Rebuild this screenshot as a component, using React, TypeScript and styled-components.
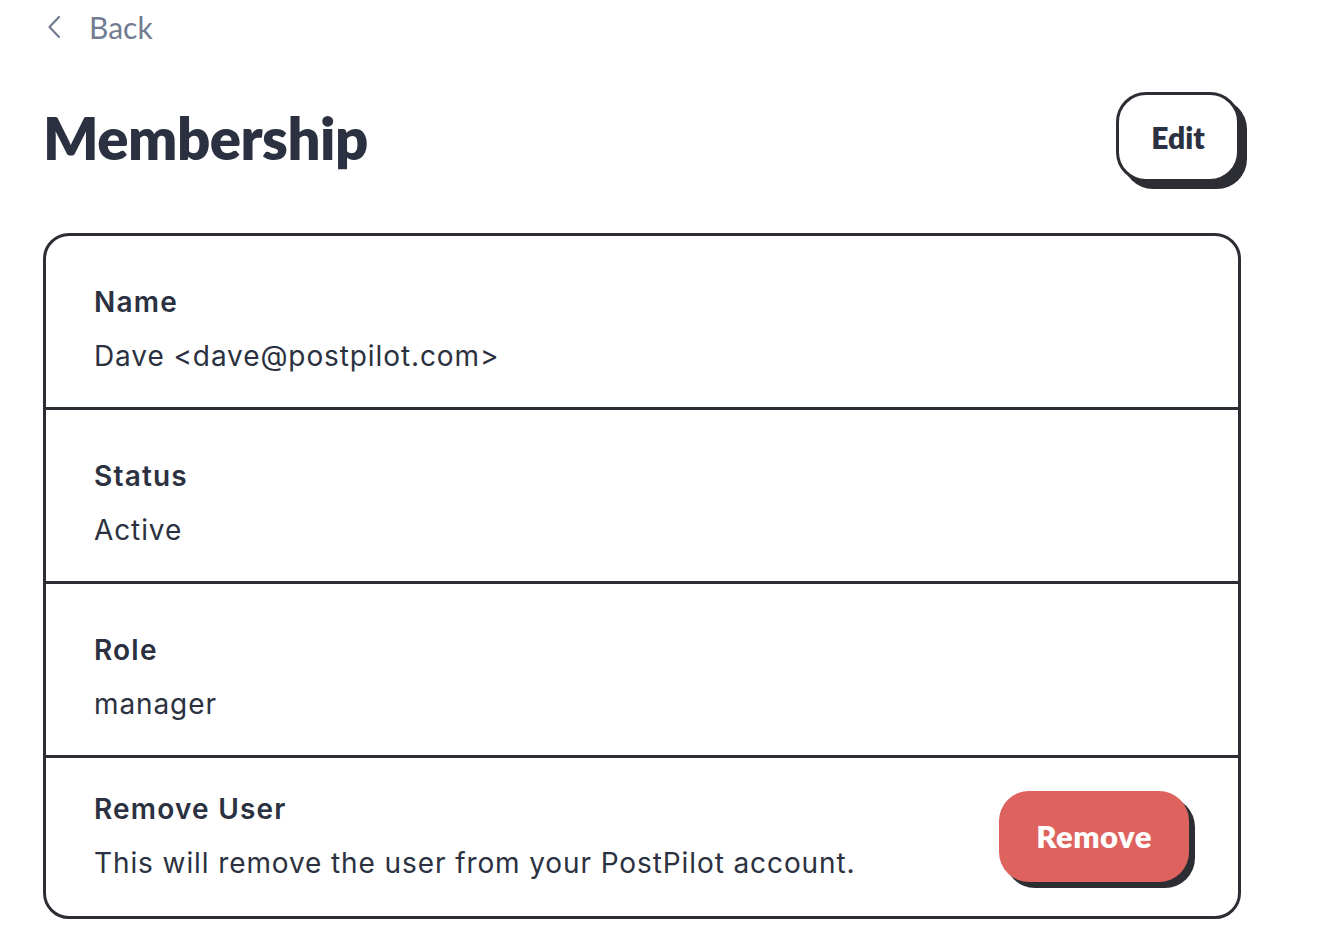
import styled, { createGlobalStyle } from "styled-components";

const GlobalStyle = createGlobalStyle`
  html, body {
    margin: 0;
    padding: 0;
    background: #ffffff;
  }
  body {
    font-family: "Inter", "Open Sans", sans-serif;
    color: #2b3140;
  }
`;

const Page = styled.div`
  width: 1340px;
  padding: 0 99px 0 43px;
  box-sizing: border-box;
`;

const BackLink = styled.a`
  display: flex;
  align-items: center;
  gap: 28px;
  height: 54px;
  padding-left: 4px;
  color: #727c90;
  font-family: "Lato", sans-serif;
  font-size: 30px;
  text-decoration: none;
  cursor: pointer;
`;

const Header = styled.div`
  display: flex;
  align-items: center;
  justify-content: space-between;
  margin-top: 38px;
  margin-bottom: 51px;
`;

const Title = styled.h1`
  margin: 0;
  font-family: "Lato", sans-serif;
  font-size: 58px;
  font-weight: 800;
  letter-spacing: -0.5px;
  color: #2b3140;
`;

const ShadowButton = styled.button<{ $variant?: "outline" | "danger" }>`
  font-family: "Lato", sans-serif;
  font-weight: 800;
  border-radius: 30px;
  cursor: pointer;
  box-sizing: border-box;
  ${(p) =>
    p.$variant === "danger"
      ? `
    background: #de625d;
    color: #ffffff;
    border: none;
    width: 190px;
    height: 91px;
    font-size: 31px;
    letter-spacing: 0.5px;
    box-shadow: 6px 6px 0 #2d2e34;
  `
      : `
    background: #ffffff;
    color: #2b3140;
    border: 3px solid #2d2e34;
    width: 124px;
    height: 90px;
    font-size: 30px;
    box-shadow: 7px 7px 0 #2d2e34;
  `}
`;

const EditButton = styled(ShadowButton)`
  margin-right: 1px;
`;

const Card = styled.div`
  border: 3px solid #2d2e34;
  border-radius: 26px;
  overflow: hidden;
`;

const Row = styled.div<{ $last?: boolean }>`
  display: flex;
  align-items: center;
  justify-content: space-between;
  padding: ${(p) => (p.$last ? "24px 49px 26px 48px" : "39px 48px 24px 48px")};
  border-bottom: ${(p) => (p.$last ? "none" : "3px solid #2d2e34")};
`;

const Field = styled.div`
  display: flex;
  flex-direction: column;
`;

const Label = styled.div`
  font-size: 28px;
  font-weight: 600;
  line-height: 54px;
  letter-spacing: 1.2px;
  color: #2b3140;
`;

const Value = styled.div`
  font-size: 28px;
  font-weight: 400;
  line-height: 54px;
  letter-spacing: 0.9px;
  color: #2b3140;
`;

const fields = [
  { label: "Name", value: "Dave <dave@postpilot.com>" },
  { label: "Status", value: "Active" },
  { label: "Role", value: "manager" },
];

export default function App() {
  return (
    <>
      <GlobalStyle />
      <Page>
        <BackLink>
          <svg width="14" height="24" viewBox="0 0 14 24" fill="none">
            <path d="M12 2 L2.5 12 L12 22" stroke="#727c90" strokeWidth="2.2" strokeLinecap="round" strokeLinejoin="round" />
          </svg>
          Back
        </BackLink>
        <Header>
          <Title>Membership</Title>
          <EditButton>Edit</EditButton>
        </Header>
        <Card>
          {fields.map((f) => (
            <Row key={f.label}>
              <Field>
                <Label>{f.label}</Label>
                <Value>{f.value}</Value>
              </Field>
            </Row>
          ))}
          <Row $last>
            <Field>
              <Label>Remove User</Label>
              <Value>This will remove the user from your PostPilot account.</Value>
            </Field>
            <ShadowButton $variant="danger">Remove</ShadowButton>
          </Row>
        </Card>
      </Page>
    </>
  );
}
